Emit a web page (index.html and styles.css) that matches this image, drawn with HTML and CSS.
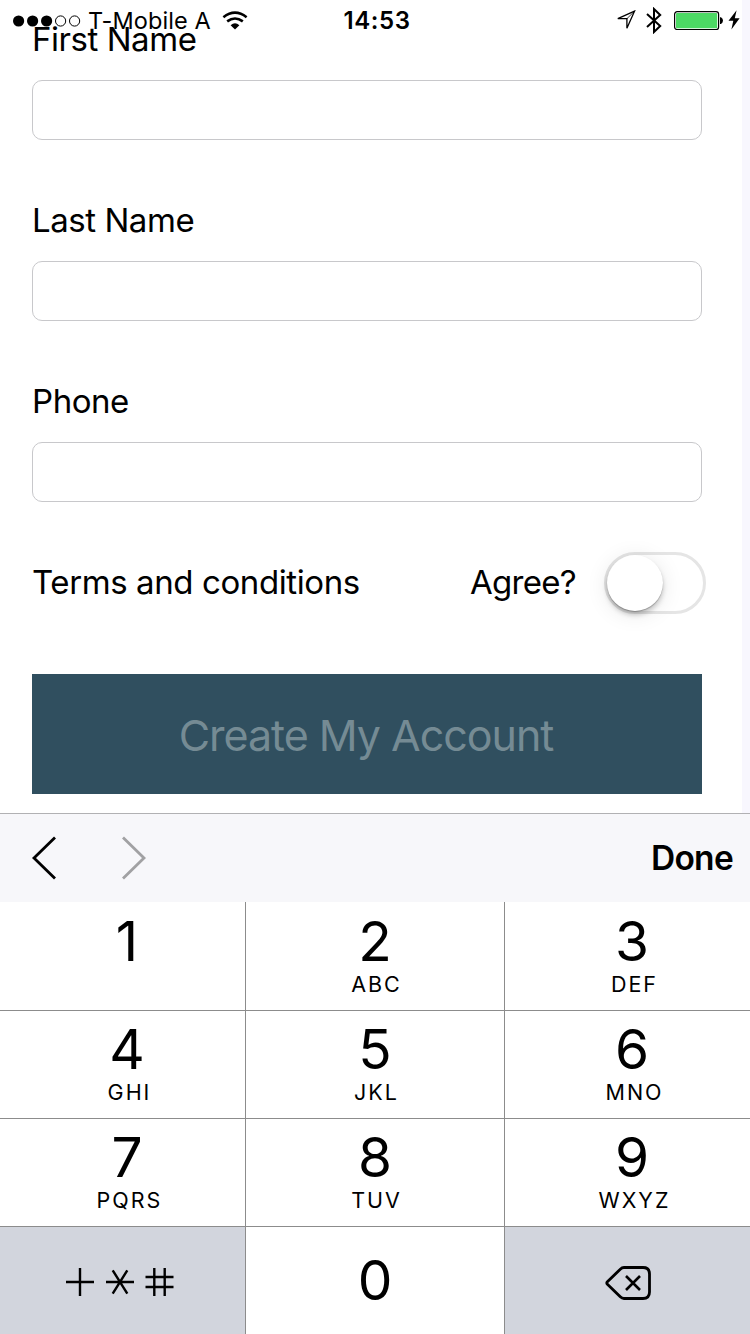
FILE: index.html
```html
<!DOCTYPE html>
<html lang="en">
<head>
<meta charset="utf-8">
<title>Create account</title>
<link rel="stylesheet" href="styles.css">
</head>
<body>
<div class="screen">
  <header class="status">
    <div class="status-left">
      <svg class="signal" width="68" height="12" viewBox="0 0 68 12"><g fill="#000"><circle cx="5.6" cy="6" r="5.6"/><circle cx="19.6" cy="6" r="5.6"/><circle cx="33.6" cy="6" r="5.6"/></g><g fill="none" stroke="#000"><circle cx="47.6" cy="6" r="5.1"/><circle cx="61.6" cy="6" r="5.1"/></g></svg>
      <span class="carrier">T-Mobile A</span>
      <svg class="wifi" width="26" height="19" viewBox="0 0 26 19"><path d="M1.4 6.2Q13-2.8 24.6 6.2" fill="none" stroke="#000" stroke-width="2.6"/><path d="M5.2 10.4Q13 4.6 20.8 10.4" fill="none" stroke="#000" stroke-width="2.6"/><path d="M8.6 14.3Q13 10.4 17.4 14.3L13 18.4z"/></svg>
    </div>
    <span class="clock">14:53</span>
    <div class="status-right">
      <svg class="location" width="20" height="20" viewBox="0 0 20 20"><path d="M18.5 1.2L1.8 8.7H10.9V18.2z" fill="none" stroke="#000" stroke-width="1.3"/><path d="M18.5 1.2L10.9 8.7" stroke="#000" stroke-width=".8"/></svg>
      <svg class="bluetooth" width="16" height="27" viewBox="0 0 16 27"><path d="M1 7L14.2 19L8 25V2L14.2 8L1 20" fill="none" stroke="#000" stroke-width="2"/></svg>
      <svg class="battery" width="50" height="20" viewBox="0 0 50 20"><rect x=".6" y=".7" width="44" height="17.8" rx="2.6" fill="#fff" stroke="#000" stroke-width="1.2"/><rect x="2" y="2" width="41.2" height="15.2" rx="1" fill="#4cd964"/><path d="M46 6.3h1q2 1.2 2 3.3t-2 3.3h-1z"/></svg>
      <svg class="bolt" width="12" height="20" viewBox="0 0 12 20"><path d="M8.6.2L.5 10.8H5.3L3.4 19.5L11.6 8.2H6.8z"/></svg>
    </div>
  </header>

  <main class="form">
    <div class="field"><label class="label" for="first">First Name</label><input class="input" id="first"></div>
    <div class="field"><label class="label" for="last">Last Name</label><input class="input" id="last"></div>
    <div class="field"><label class="label" for="phone">Phone</label><input class="input" id="phone"></div>
    <div class="terms">
      <span class="terms-text">Terms and conditions</span>
      <span class="agree">Agree?</span>
      <span class="toggle"><span class="knob"></span></span>
    </div>
    <button class="submit"><span class="submit-text">Create My Account</span></button>
  </main>

  <div class="toolbar">
    <svg class="prev" width="26" height="44" viewBox="0 0 26 44"><path d="M24 1.5L3 22L24 42.5" fill="none" stroke="#000" stroke-width="2.8"/></svg>
    <svg class="next" width="26" height="44" viewBox="0 0 26 44"><path d="M2 1.5L23 22L2 42.5" fill="none" stroke="#a1a1a3" stroke-width="2.8"/></svg>
    <span class="done">Done</span>
  </div>

  <div class="keypad">
    <div class="key side"><span class="digit">1</span></div>
    <div class="key"><span class="digit">2</span><span class="letters">ABC</span></div>
    <div class="key side"><span class="digit">3</span><span class="letters">DEF</span></div>
    <div class="key side"><span class="digit">4</span><span class="letters">GHI</span></div>
    <div class="key"><span class="digit">5</span><span class="letters">JKL</span></div>
    <div class="key side"><span class="digit">6</span><span class="letters">MNO</span></div>
    <div class="key side"><span class="digit">7</span><span class="letters">PQRS</span></div>
    <div class="key"><span class="digit">8</span><span class="letters">TUV</span></div>
    <div class="key side"><span class="digit">9</span><span class="letters">WXYZ</span></div>
    <div class="key icon-key symbols">
      <svg width="108" height="28" viewBox="0 0 108 28"><path d="M0 14H28M14 0V28M40 14H68M46.7 2.3L61.3 25.7M61.3 2.3L46.7 25.7M79.5 9H107.5M79.5 19H107.5M88.3 0V28M98.7 0V28" fill="none" stroke="#000" stroke-width="2.4"/></svg>
    </div>
    <div class="key zero"><span class="digit">0</span></div>
    <div class="key icon-key delete">
      <svg width="46" height="34" viewBox="0 0 46 34"><path d="M19 1.5H38Q44.5 1.5 44.5 8V26Q44.5 32.5 38 32.5H19Q17 32.5 15.3 30.8L2.4 18.3Q1.1 17 2.4 15.7L15.3 3.2Q17 1.5 19 1.5z" fill="none" stroke="#000" stroke-width="2.8"/><path d="M21 10L35 24M35 10L21 24" stroke="#000" stroke-width="2.6"/></svg>
    </div>
  </div>
</div>
</body>
</html>
```
FILE: styles.css
```css
* { box-sizing: border-box; }
body { margin: 0; font-family: Inter, "Liberation Sans", sans-serif; color: #000; }
svg { display: block; flex: none; }

.screen {
  position: relative;
  width: 750px;
  height: 1334px;
  overflow: hidden;
  display: flex;
  flex-direction: column;
  background: #fff;
}

/* Status bar floats over the scrolled form */
.status {
  position: absolute;
  top: 0;
  left: 0;
  width: 750px;
  height: 42px;
  display: grid;
  grid-template-columns: 1fr auto 1fr;
  align-items: center;
  padding: 0 10px 0 13px;
}
.status-left { display: flex; align-items: center; }
.signal { margin-top: -1px; }
.carrier { margin-left: 7px; font-size: 23.5px; line-height: 42px; letter-spacing: 0.1px; white-space: nowrap; }
.wifi { margin: -2px 0 0 11px; }
.clock { font-size: 24px; font-weight: 600; line-height: 42px; letter-spacing: 0.6px; padding-left: 1px; }
.status-right { display: flex; align-items: center; justify-content: flex-end; }
.location { margin-top: -2px; }
.bluetooth { margin: -1px 0 0 10px; }
.battery { margin: -1px 0 0 12px; }
.bolt { margin: -2px 0 0 4px; }

.form {
  height: 813px;
  padding: 19px 40px 0 32px;
  border-right: 8px solid #f8f7fe;
  display: flex;
  flex-direction: column;
}
.field { height: 181px; flex: none; display: flex; flex-direction: column; }
.label { height: 40px; line-height: 40px; font-size: 33px; letter-spacing: -0.45px; margin-bottom: 21px; white-space: nowrap; }
.input {
  width: 100%;
  height: 60px;
  border: 1px solid #c8c8cb;
  border-radius: 10px;
  background: #fff;
  outline: 0;
}
.terms { height: 62px; margin: -10px -4px 0 0; display: flex; align-items: center; font-size: 33px; letter-spacing: -0.4px; white-space: nowrap; }
.terms-text { margin-top: -2px; }
.agree { margin: -2px 0 0 auto; letter-spacing: -0.7px; }
.toggle {
  width: 102px;
  height: 62px;
  margin-left: 28px;
  border: 3px solid #e5e5e5;
  border-radius: 31px;
  flex: none;
}
.knob {
  display: block;
  width: 56px;
  height: 56px;
  border-radius: 50%;
  background: #fff;
  box-shadow: 0 1px 1px rgba(0,0,0,.25), 0 4px 5px rgba(0,0,0,.2), 0 3px 22px rgba(0,0,0,.1);
}
.submit {
  height: 120px;
  margin-top: 60px;
  padding: 2px 2px 0 0;
  border: 0;
  border-radius: 0;
  background: #304f5f;
  color: #758b94;
  font-family: inherit;
  font-size: 43px;
  letter-spacing: -1.03px;
  flex: none;
}

.toolbar {
  height: 89px;
  padding: 0 17px 1px 31px;
  border-top: 1px solid #b1b1b3;
  background: #f7f7fa;
  display: flex;
  align-items: center;
}
.next { margin-left: 64px; }
.done { margin: 1px 0 0 auto; font-size: 33.5px; font-weight: 600; letter-spacing: -0.7px; }

.keypad {
  height: 432px;
  display: grid;
  grid-template-columns: 246px 259px 245px;
  grid-template-rows: 109px 108px 108px 107px;
}
.key {
  border-right: 1px solid #8c8c8c;
  border-bottom: 1px solid #8c8c8c;
  padding-top: 9px;
  display: flex;
  flex-direction: column;
  align-items: center;
}
.key:nth-child(3n) { border-right: 0; }
.key:nth-child(n+10) { border-bottom: 0; }
.key:nth-child(n+4) { padding-top: 8px; }
.key.side { padding-left: 9px; }
.digit { height: 60px; line-height: 60px; font-size: 55px; }
.letters { height: 26px; line-height: 26px; font-size: 21.5px; letter-spacing: 2px; padding-left: 3px; }
.side .letters { padding-left: 5px; }
.icon-key { background: #d2d5dd; justify-content: center; }
.key.symbols { padding: 2px 5px 0 0; }
.key.zero { padding-top: 23px; }
.key.delete { padding: 5px 0 0 0; }
```
